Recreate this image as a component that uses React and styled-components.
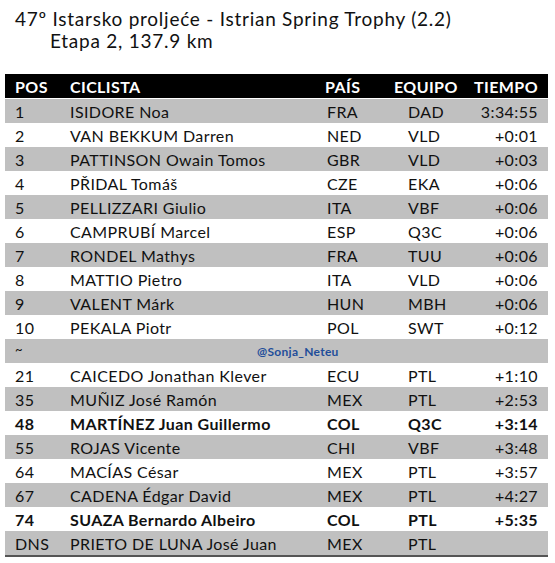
import React from "react";
import styled, { createGlobalStyle } from "styled-components";

const GlobalStyle = createGlobalStyle`
  html, body {
    margin: 0;
    padding: 0;
    background: #ffffff;
  }
  body {
    font-family: Lato, "Open Sans", sans-serif;
    color: #111111;
  }
`;

const Page = styled.div`
  width: 555px;
  height: 563px;
  padding: 8px 7px 0 5px;
  box-sizing: border-box;
`;

const Title = styled.div`
  font-size: 19px;
  line-height: 22px;
  letter-spacing: 0.75px;
  padding-left: ${(p) => p.$indent}px;
  white-space: nowrap;
`;

const Titles = styled.div`
  margin-bottom: 22px;
`;

const Table = styled.div`
  width: 543px;
  border-bottom: 2px solid #555555;
`;

const Row = styled.div`
  display: grid;
  grid-template-columns: 65px 252px 71px 77px 78px;
  height: 24px;
  align-items: center;
  font-size: 16px;
  letter-spacing: 0.4px;
  font-weight: ${(p) => (p.$bold ? 700 : 400)};
  background: ${(p) => (p.$grey ? "#c0c0c0" : "#ffffff")};
  white-space: nowrap;
`;

const HeadRow = styled(Row)`
  background: #000000;
  color: #ffffff;
  font-weight: 700;
  height: 24px;
  border-bottom: 1px solid #ffffff;
`;

const Cell = styled.div`
  padding-left: ${(p) => p.$pl ?? 0}px;
  padding-right: ${(p) => p.$pr ?? 0}px;
  text-align: ${(p) => (p.$right ? "right" : "left")};
`;

const NoteRow = styled.div`
  display: flex;
  align-items: center;
  height: 24px;
  background: #c0c0c0;
  font-size: 13px;
`;

const Tilde = styled.span`
  padding-left: 10px;
  width: 242px;
  align-self: flex-start;
  padding-top: 2px;
`;

const Handle = styled.span`
  color: #1f4e9a;
  font-weight: 700;
  font-size: 12px;
  letter-spacing: 0.3px;
`;

const top = [
  ["1", "ISIDORE Noa", "FRA", "DAD", "3:34:55"],
  ["2", "VAN BEKKUM Darren", "NED", "VLD", "+0:01"],
  ["3", "PATTINSON Owain Tomos", "GBR", "VLD", "+0:03"],
  ["4", "PŘIDAL Tomáš", "CZE", "EKA", "+0:06"],
  ["5", "PELLIZZARI Giulio", "ITA", "VBF", "+0:06"],
  ["6", "CAMPRUBÍ Marcel", "ESP", "Q3C", "+0:06"],
  ["7", "RONDEL Mathys", "FRA", "TUU", "+0:06"],
  ["8", "MATTIO Pietro", "ITA", "VLD", "+0:06"],
  ["9", "VALENT Márk", "HUN", "MBH", "+0:06"],
  ["10", "PEKALA Piotr", "POL", "SWT", "+0:12"],
];

const rest = [
  ["21", "CAICEDO Jonathan Klever", "ECU", "PTL", "+1:10"],
  ["35", "MUÑIZ José Ramón", "MEX", "PTL", "+2:53"],
  ["48", "MARTÍNEZ Juan Guillermo", "COL", "Q3C", "+3:14", true],
  ["55", "ROJAS Vicente", "CHI", "VBF", "+3:48"],
  ["64", "MACÍAS César", "MEX", "PTL", "+3:57"],
  ["67", "CADENA Édgar David", "MEX", "PTL", "+4:27"],
  ["74", "SUAZA Bernardo Albeiro", "COL", "PTL", "+5:35", true],
  ["DNS", "PRIETO DE LUNA José Juan", "MEX", "PTL", ""],
];

const RiderRow = ({ data, grey }) => {
  const [pos, name, country, team, time, bold] = data;
  return (
    <Row $grey={grey} $bold={bold}>
      <Cell $pl={10}>{pos}</Cell>
      <Cell>{name}</Cell>
      <Cell $pl={5}>{country}</Cell>
      <Cell $pl={15}>{team}</Cell>
      <Cell $right $pr={10}>{time}</Cell>
    </Row>
  );
};

export default function App() {
  return (
    <Page>
      <GlobalStyle />
      <Titles>
        <Title $indent={10}>47º Istarsko proljeće - Istrian Spring Trophy (2.2)</Title>
        <Title $indent={45}>Etapa 2, 137.9 km</Title>
      </Titles>
      <Table>
        <HeadRow>
          <Cell $pl={10}>POS</Cell>
          <Cell>CICLISTA</Cell>
          <Cell $pl={3}>PAÍS</Cell>
          <Cell $pl={1}>EQUIPO</Cell>
          <Cell $right $pr={10}>TIEMPO</Cell>
        </HeadRow>
        {top.map((r, i) => (
          <RiderRow key={r[0]} data={r} grey={i % 2 === 0} />
        ))}
        <NoteRow>
          <Tilde>~</Tilde>
          <Handle>@Sonja_Neteu</Handle>
        </NoteRow>
        {rest.map((r, i) => (
          <RiderRow key={r[0]} data={r} grey={i % 2 === 1} />
        ))}
      </Table>
    </Page>
  );
}
